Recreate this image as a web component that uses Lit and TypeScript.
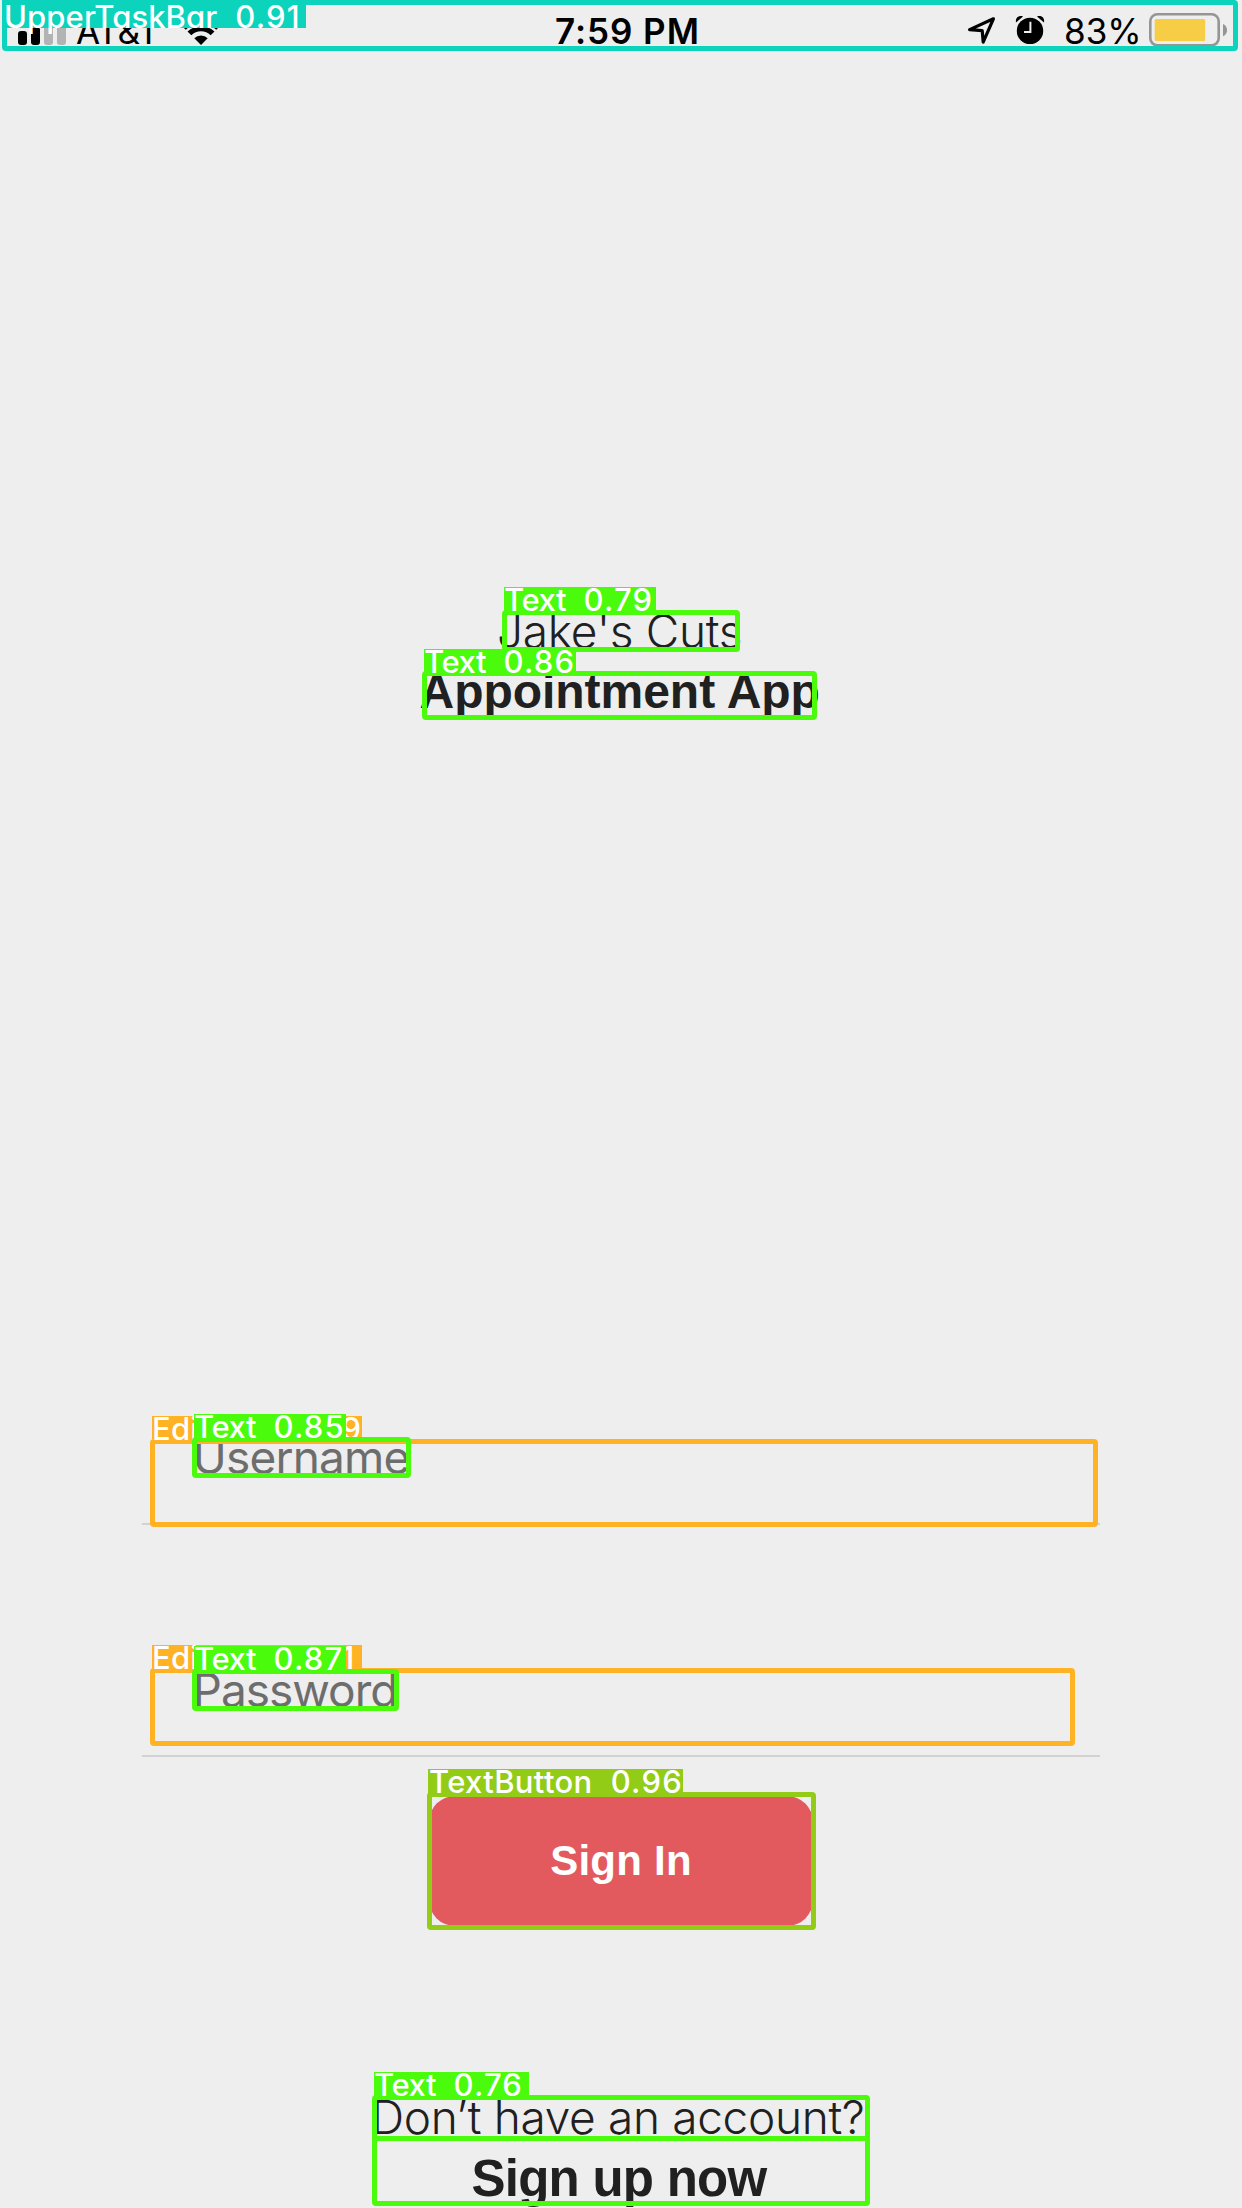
import { LitElement, html, css } from "lit";
import { customElement, property } from "lit/decorators.js";
import { styleMap } from "lit/directives/style-map.js";

type Rect = [left: number, top: number, right: number, bottom: number];

interface Detection {
  kind: string;
  score: string;
  color: string;
  box: Rect;
  tag: Rect;
  cls?: string;
}

const TEAL = "#0bd3bc";
const GREEN = "#4afb0c";
const ORANGE = "#ffb224";
const OLIVE = "#92cc17";

const DETECTIONS: Detection[] = [
  { kind: "EditText", score: "0.89", color: ORANGE, box: [150, 1439, 1098, 1527], tag: [152, 1416, 362, 1439], cls: "edit" },
  { kind: "EditText", score: "0.81", color: ORANGE, box: [150, 1668, 1075, 1746], tag: [152, 1645, 362, 1669], cls: "edit" },
  { kind: "Text", score: "0.76", color: GREEN, box: [372, 2095, 870, 2141], tag: [374, 2072, 529, 2096] },
  { kind: "Text", score: "0.79", color: GREEN, box: [502, 610, 740, 652], tag: [504, 587, 656, 612] },
  { kind: "Text", score: "0.85", color: GREEN, box: [192, 1437, 411, 1478], tag: [194, 1414, 346, 1439] },
  { kind: "Text", score: "0.86", color: GREEN, box: [422, 671, 817, 720], tag: [424, 649, 576, 673] },
  { kind: "Text", score: "0.87", color: GREEN, box: [192, 1669, 399, 1711], tag: [194, 1646, 346, 1670] },
  { kind: "UpperTaskBar", score: "0.91", color: TEAL, box: [2, 0, 1238, 51], tag: [2, 0, 306, 28], cls: "bar" },
  { kind: "TextButton", score: "0.96", color: OLIVE, box: [427, 1792, 816, 1930], tag: [428, 1769, 683, 1794], cls: "btn" },
];

@customElement("status-bar")
class StatusBar extends LitElement {
  static styles = css`
    :host {
      display: grid;
      flex: none;
      grid-template-columns: 555px 1fr auto;
      height: 51px;
      box-sizing: border-box;
      padding-top: 11px;
      font: 400 35px/40px Inter, sans-serif;
      color: #000;
      white-space: nowrap;
    }
    svg { display: block; }
    .left, .right { display: flex; align-items: flex-start; }
    .left { padding-left: 18px; }
    .carrier { margin-left: 10px; width: 107px; letter-spacing: -0.6px; }
    .time { font-weight: 600; letter-spacing: 0.95px; }
    .right { padding-right: 14px; }
    .pct { width: 84px; margin-left: 19px; }
  `;
  render() {
    return html`
      <div class="left">
        <svg width="48" height="40" viewBox="18 11 48 40">
          <rect x="18" y="31" width="9" height="14" rx="3" />
          <rect x="31" y="27" width="9" height="18" rx="3" />
          <rect x="44" y="22" width="9" height="23" rx="3" fill="#b3b3b3" />
          <rect x="57" y="18" width="9" height="27" rx="3" fill="#b3b3b3" />
        </svg>
        <span class="carrier">AT&amp;T</span>
        <svg width="36" height="40" viewBox="183 11 36 40">
          <path d="M201 45 L194.3 38.3 A9.5 9.5 0 0 1 207.7 38.3 Z" />
          <path d="M189.4 33.4 A16.4 16.4 0 0 1 212.6 33.4" fill="none" stroke="#000" stroke-width="5.4" />
          <path d="M184 28 A24.4 24.4 0 0 1 218 28" fill="none" stroke="#000" stroke-width="5" />
        </svg>
      </div>
      <div class="time">7:59 PM</div>
      <div class="right">
        <svg width="30" height="40" viewBox="966 11 30 40">
          <path d="M993.4 18.8 L969.6 29.6 L982.2 30.6 L983.2 42.2 Z" fill="none" stroke="#000" stroke-width="3.2" stroke-linejoin="round" />
        </svg>
        <svg width="49" height="40" viewBox="996 11 49 40">
          <circle cx="1030" cy="30.9" r="13.2" />
          <path d="M1016 22.4 C1015 17.6 1019 14.8 1023 16.4 Z M1044 22.4 C1045 17.6 1041 14.8 1037 16.4 Z" />
          <path d="M1030.4 21.8 V32 H1024" fill="none" stroke="#eee" stroke-width="2" />
        </svg>
        <span class="pct">83%</span>
        <svg width="80" height="40" viewBox="1148 11 80 40">
          <rect x="1150.3" y="14.3" width="68.4" height="31" rx="7" fill="none" stroke="#959595" stroke-width="2.6" />
          <rect x="1154.7" y="19" width="50.5" height="22" rx="1.5" fill="#f7cd46" />
          <path d="M1223 24 C1228.4 26 1228.4 34 1223 36.3 Z" fill="#959595" />
        </svg>
      </div>
    `;
  }
}

const place = (r: Rect) => ({
  left: `${r[0]}px`,
  top: `${r[1]}px`,
  width: `${r[2] - r[0]}px`,
  height: `${r[3] - r[1]}px`,
});

@customElement("detection-box")
class DetectionBox extends LitElement {
  @property({ attribute: false }) item!: Detection;
  static styles = css`
    :host { display: contents; }
    .box {
      position: absolute;
      box-sizing: border-box;
      border: 5px solid;
      border-radius: 4px;
    }
    .tag {
      position: absolute;
      color: #fff;
      font: 500 31px/26px Inter, sans-serif;
      font-feature-settings: "cv11";
      letter-spacing: -0.4px;
      word-spacing: 9.5px;
      white-space: nowrap;
    }
    .score { letter-spacing: 1.2px; }
    .bar { line-height: 33px; letter-spacing: 0.1px; padding-left: 2px; box-sizing: border-box; }
    .btn { letter-spacing: 0.35px; padding-left: 1px; box-sizing: border-box; }
    .edit { letter-spacing: 0.2px; }
  `;
  render() {
    const { box, tag, color, kind, score, cls } = this.item;
    return html`
      <div class="box" style=${styleMap({ ...place(box), borderColor: color })}></div>
      <div class="tag ${cls ?? ""}" style=${styleMap({ ...place(tag), background: color })}>${kind} <span class="score">${score}</span></div>
    `;
  }
}

@customElement("app-root")
class AppRoot extends LitElement {
  static styles = css`
    :host {
      display: block;
      position: relative;
      width: 1242px;
      height: 2208px;
      overflow: hidden;
      background: #eee;
      color: #202020;
      font-family: "Liberation Sans", Arial, sans-serif;
      white-space: nowrap;
    }
    .page { display: flex; flex-direction: column; height: 2208px; }
    .page > * { flex: none; }
    h1, h2, p { margin: 0; }
    .brand { padding-top: 550px; height: 838px; box-sizing: border-box; }
    .light { font: 300 46px/60px Inter, sans-serif; }
    .name { padding-left: 497px; letter-spacing: -0.3px; }
    .app { padding-left: 419.5px; font: 700 48px/61px "Liberation Sans", Arial, sans-serif; letter-spacing: -0.03px; }
    .form { display: flex; flex-direction: column; }
    .field {
      box-sizing: border-box;
      width: 958px;
      height: 111px;
      margin-left: 142px;
      padding: 13px 0 0 50.5px;
      border-bottom: 2px solid #d2d2d2;
      color: #6d6d6d;
      font: 400 46px/60px Inter, sans-serif;
    }
    .user { margin-top: 525px; letter-spacing: -0.8px; }
    .pass { margin-top: 121px; padding-top: 14px; letter-spacing: -1px; }
    .signin {
      width: 384px;
      height: 130px;
      margin: 39px 0 0 429px;
      padding: 0;
      border: 0;
      border-radius: 26px;
      background: #e25a5e;
      color: #fff;
      font: 700 42px/130px "Liberation Sans", Arial, sans-serif;
      letter-spacing: 0.25px;
      text-align: center;
    }
    .foot { padding-top: 161px; height: 121px; }
    .ask { padding-left: 371px; letter-spacing: -0.33px; }
    .join { padding-left: 471.5px; font: 700 51px/63px "Liberation Sans", Arial, sans-serif; letter-spacing: -0.75px; }
    .join-frame {
      position: absolute;
      left: 372px;
      top: 2136px;
      width: 498px;
      height: 70px;
      box-sizing: border-box;
      border: 5px solid #4afb0c;
      border-radius: 4px;
    }
  `;
  render() {
    return html`
      <div class="page">
        <status-bar></status-bar>
        <header class="brand">
          <p class="light name">Jake's Cuts</p>
          <h1 class="app">Appointment App</h1>
        </header>
        <section class="form">
          <div class="field user">Username</div>
          <div class="field pass">Password</div>
          <button class="signin">Sign In</button>
        </section>
        <footer class="foot">
          <p class="light ask">Don’t have an account?</p>
          <h2 class="join">Sign up now</h2>
        </footer>
      </div>
      ${DETECTIONS.map((d) => html`<detection-box .item=${d}></detection-box>`)}
      <div class="join-frame"></div>
    `;
  }
}
